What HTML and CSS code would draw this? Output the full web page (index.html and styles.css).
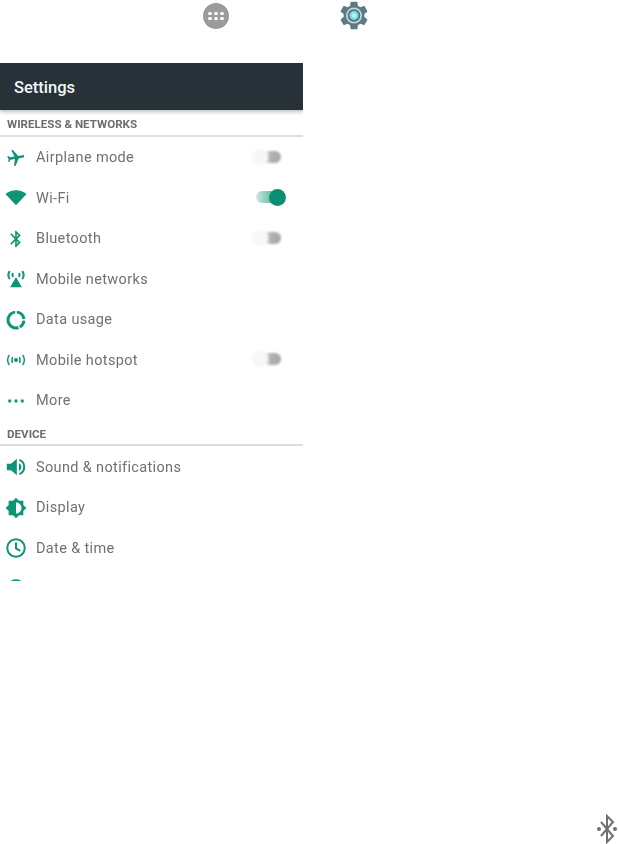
FILE: index.html
```html
<!DOCTYPE html>
<html lang="en">
<head>
    <meta charset="UTF-8">
    <meta name="viewport" content="width=device-width, initial-scale=1.0">
    <title>Settings</title>
    <link rel="stylesheet" href="styles.css">
</head>
<body>
    <div class="launcher">
        <div class="apps-icon">
            <span></span><span></span><span></span><span></span><span></span><span></span>
        </div>
        <svg class="gear-icon" viewBox="2 1.5 20 21">
            <path fill="#5f7a86" d="M19.43 12.98c.04-.32.07-.64.07-.98s-.03-.66-.07-.98l2.11-1.65c.19-.15.24-.42.12-.64l-2-3.46c-.12-.22-.39-.3-.61-.22l-2.49 1c-.52-.4-1.08-.73-1.69-.98l-.38-2.65C14.46 2.18 14.25 2 14 2h-4c-.25 0-.46.18-.49.42l-.38 2.65c-.61.25-1.17.59-1.69.98l-2.49-1c-.23-.09-.49 0-.61.22l-2 3.46c-.13.22-.07.49.12.64l2.11 1.65c-.04.32-.07.65-.07.98s.03.66.07.98l-2.11 1.65c-.19.15-.24.42-.12.64l2 3.46c.12.22.39.3.61.22l2.49-1c.52.4 1.08.73 1.69.98l.38 2.65c.03.24.24.42.49.42h4c.25 0 .46-.18.49-.42l.38-2.65c.61-.25 1.17-.59 1.69-.98l2.49 1c.23.09.49 0 .61-.22l2-3.46c.12-.22.07-.49-.12-.64l-2.11-1.65z"/>
            <circle cx="12" cy="12" r="5.800" fill="#c5d3d8"/>
            <circle cx="12" cy="12" r="4.500" fill="#4e6873"/>
            <circle cx="12" cy="12" r="3.400" fill="#6fdede"/>
            <circle cx="12" cy="12" r="1.800" fill="#b5efef"/>
        </svg>
    </div>

    <div class="screen">
        <div class="title-bar">Settings</div>

        <div class="section-label">Wireless &amp; networks</div>
        <div class="rows first">
            <div class="row">
                <svg class="row-icon" viewBox="0 0 24 24"><path transform="rotate(80 12 12)" d="M21 16v-2l-8-5V3.500c0-.83-.67-1.500-1.500-1.500S10 2.670 10 3.500V9l-8 5v2l8-2.500V19l-2 1.500V22l3.500-1 3.500 1v-1.500L13 19v-5.500l8 2.500z"/></svg>
                <span class="row-label">Airplane mode</span>
                <div class="toggle"><span class="thumb"></span></div>
            </div>
            <div class="row">
                <svg class="row-icon big" viewBox="0 0 24 24"><path d="M12 20L.5 7.500C3.600 5 7.600 3.500 12 3.500s8.400 1.500 11.500 4z"/></svg>
                <span class="row-label">Wi-Fi</span>
                <div class="toggle on"><span class="thumb"></span></div>
            </div>
            <div class="row">
                <svg class="row-icon" viewBox="0 0 24 24"><path d="M17.710 7.710L12 2h-1v7.590L6.410 5 5 6.410 10.590 12 5 17.590 6.410 19 11 14.410V22h1l5.710-5.710-4.300-4.290 4.300-4.290zM13 5.830l1.880 1.880L13 9.590V5.830zm1.880 10.460L13 18.170v-3.760l1.880 1.880z"/></svg>
                <span class="row-label">Bluetooth</span>
                <div class="toggle"><span class="thumb"></span></div>
            </div>
            <div class="row">
                <svg class="row-icon" viewBox="0 0 24 24">
                    <path d="M12 9.500l7 12.500H5z"/>
                    <path class="line" d="M8.500 5c-1 1.400-1 3.200 0 4.600M15.500 5c1 1.400 1 3.200 0 4.600M4.500 2.500c-2 2.800-2 6.800 0 9.600M19.500 2.500c2 2.800 2 6.800 0 9.600"/>
                </svg>
                <span class="row-label">Mobile networks</span>
            </div>
            <div class="row">
                <svg class="row-icon" viewBox="0 0 24 24">
                    <path class="line thick" d="M13 2.550a9.500 9.500 0 0 1 8.450 8.450M21.450 12.800a9.500 9.500 0 0 1-4.950 7.600M15 21A9.500 9.500 0 1 1 11 2.550"/>
                </svg>
                <span class="row-label">Data usage</span>
            </div>
            <div class="row">
                <svg class="row-icon" viewBox="0 0 24 24">
                    <circle cx="12" cy="12" r="2.400"/>
                    <path class="line thin" d="M8 8.500c-1.300 2.200-1.300 4.800 0 7M16 8.500c1.300 2.200 1.300 4.800 0 7M4 6c-2.600 3.800-2.600 8.200 0 12M20 6c2.600 3.800 2.600 8.200 0 12"/>
                </svg>
                <span class="row-label">Mobile hotspot</span>
                <div class="toggle"><span class="thumb"></span></div>
            </div>
            <div class="row">
                <svg class="row-icon" viewBox="0 0 24 24">
                    <circle cx="4.500" cy="12" r="2"/><circle cx="12" cy="12" r="2"/><circle cx="19.500" cy="12" r="2"/>
                </svg>
                <span class="row-label">More</span>
            </div>
        </div>

        <div class="section-label">Device</div>
        <div class="rows second">
            <div class="row">
                <svg class="row-icon" viewBox="0 0 24 24">
                    <path d="M1 8v8h5l7 6V2L6 8H1zm17.500 4c0-2.100-1.200-3.900-3-4.800v9.600c1.800-.9 3-2.700 3-4.800z"/>
                    <path class="line" d="M16 3.500c3.400 1.200 5.800 4.600 5.800 8.500s-2.400 7.300-5.800 8.500"/>
                </svg>
                <span class="row-label">Sound &amp; notifications</span>
            </div>
            <div class="row">
                <svg class="row-icon big" viewBox="0 0 24 24"><path d="M20 8.690V4h-4.690L12 .69 8.690 4H4v4.690L.69 12 4 15.310V20h4.690L12 23.310 15.310 20H20v-4.690L23.310 12 20 8.690zM12 18V6c3.310 0 6 2.690 6 6s-2.690 6-6 6z"/></svg>
                <span class="row-label">Display</span>
            </div>
            <div class="row">
                <svg class="row-icon" viewBox="0 0 24 24">
                    <circle class="line" cx="12" cy="12" r="10.500"/>
                    <path class="line" d="M12 5.500v7l5 3"/>
                </svg>
                <span class="row-label">Date &amp; time</span>
            </div>
            <div class="row">
                <svg class="row-icon" viewBox="0 0 24 24"><circle class="line" cx="12" cy="12" r="10.500"/></svg>
            </div>
        </div>
    </div>

    <div class="footer">
        <svg class="bt-outline" viewBox="0 0 20 30">
            <path d="M4 8l12 14-6 6V2l6 6L4 22"/>
            <circle cx="2" cy="15" r="2"/>
            <circle cx="18" cy="15" r="2"/>
        </svg>
    </div>
</body>
</html>
```

FILE: styles.css
```css
* {
    margin: 0;
    padding: 0;
    box-sizing: border-box;
}

body {
    width: 619px;
    height: 844px;
    background: #fff;
    font-family: Roboto, 'Liberation Sans', sans-serif;
    display: flex;
    flex-direction: column;
}

.launcher {
    height: 63px;
    padding: 2px 0 0 203px;
    display: flex;
    align-items: flex-start;
    gap: 111px;
}

.apps-icon {
    width: 26px;
    height: 26px;
    margin-top: 1px;
    padding: 8px 4px;
    border-radius: 50%;
    background: #9b9b9b;
    display: grid;
    grid-template-columns: repeat(3, 1fr);
    justify-items: center;
    align-items: center;
}

.apps-icon span {
    width: 3.5px;
    height: 3.5px;
    border-radius: 50%;
    background: #fff;
}

.gear-icon {
    width: 28px;
    height: 29px;
    margin-top: -1px;
}

.screen {
    width: 303px;
    height: 518px;
    overflow: hidden;
    background: #fff;
}

.title-bar {
    height: 47px;
    padding-left: 14px;
    background: #263238;
    color: #f4f6f6;
    font-size: 16.5px;
    font-weight: 500;
    line-height: 49px;
    box-shadow: 0 2px 4px rgba(0, 0, 0, 0.25);
    position: relative;
}

.section-label {
    height: 26.5px;
    padding-left: 7px;
    border-bottom: 2px solid #dedede;
    color: #6d6d6d;
    font-size: 11.6px;
    font-weight: 700;
    line-height: 28px;
    text-transform: uppercase;
    filter: blur(0.3px);
}

.rows.first {
    padding-top: 1px;
    margin-bottom: -1.5px;
}

.rows.second {
    padding-top: 1px;
}

.row {
    height: 40.5px;
    padding: 0 22px 0 4px;
    display: flex;
    align-items: center;
    gap: 8px;
    position: relative;
}

.row-icon {
    width: 24px;
    height: 20px;
    flex: none;
    fill: #0f9478;
}

.row-icon.big {
    height: 22px;
}

.line {
    fill: none;
    stroke: #0f9478;
    stroke-width: 2.4;
}

.line.thick {
    stroke-width: 3.6;
}

.line.thin {
    stroke-width: 1.7;
}

.row-label {
    color: #707070;
    font-size: 14.5px;
    letter-spacing: 0.35px;
    filter: blur(0.4px);
}

.toggle {
    width: 29px;
    height: 12px;
    margin: -2px 0 0 auto;
    border-radius: 6px;
    background: linear-gradient(90deg, #f7f7f7 0%, #f7f7f7 45%, #b0b0b0 65%, #a8a8a8 100%);
    position: relative;
    filter: blur(1.2px);
}

.thumb {
    position: absolute;
    left: 0;
    top: -2px;
    width: 16px;
    height: 16px;
    border-radius: 50%;
    background: #f7f7f7;
}

.toggle.on {
    width: 22px;
    margin-right: 3px;
    background: linear-gradient(90deg, #d0eae3 0%, #76c3ae 60%, #76c3ae 100%);
    filter: blur(0.3px);
}

.toggle.on .thumb {
    left: auto;
    right: -8px;
    top: -2.5px;
    width: 17px;
    height: 17px;
    background: #0a8f72;
}

.footer {
    flex: 1;
    padding: 0 2px 0 0;
    display: flex;
    justify-content: flex-end;
    align-items: flex-end;
}

.bt-outline {
    width: 20px;
    height: 30px;
    fill: #6f6f6f;
}

.bt-outline path {
    fill: none;
    stroke: #6f6f6f;
    stroke-width: 2;
}
```
